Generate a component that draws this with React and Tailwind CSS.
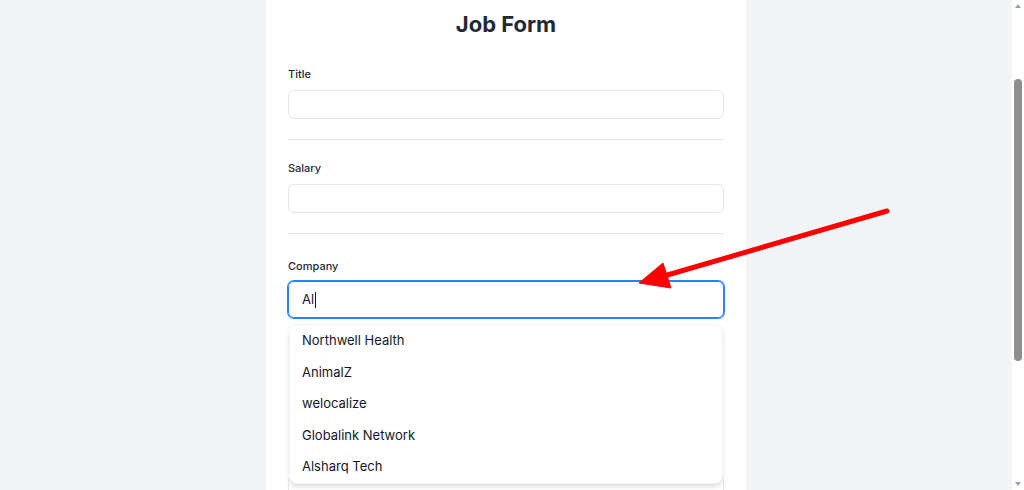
import { useState } from "react";

const companies = ["Northwell Health", "AnimalZ", "welocalize", "Globalink Network", "Alsharq Tech"];

const Field = ({ label, top = "pt-5" }) => {
  return (
    <div className={top}>
      <p className="text-[11px] font-medium text-gray-800 leading-4">{label}</p>
      <div className="mt-2 h-[29px] rounded-md border border-gray-200 bg-white"></div>
    </div>
  );
};

const Divider = () => <div className="mt-5 border-t border-gray-200"></div>;

const App = () => {
  const [value] = useState("Al");

  return (
    <div className="relative flex h-[490px] overflow-hidden bg-gray-100 font-['Inter',sans-serif]">
      {/* Page */}
      <div className="flex flex-1 justify-center">
        <div className="w-[480px] bg-white px-[22px]">
          <h1 className="pt-2 text-center text-[22px] font-bold leading-8 text-[#1f2937]">Job Form</h1>

          <Field label="Title" top="pt-[26px]" />
          <Divider />
          <Field label="Salary" />
          <Divider />

          {/* Company with suggestions */}
          <div className="relative pt-6">
            <p className="text-[11px] font-medium text-gray-800 leading-4">Company</p>
            <div className="mt-[7px] flex h-[37px] items-center rounded-md border border-blue-500 px-[13px] ring-1 ring-blue-500">
              <span className="text-[13px] text-gray-900">{value}</span>
              <span className="ml-px h-[16px] w-px bg-gray-900"></span>
            </div>

            <div className="absolute left-px right-px top-[90px] z-10 rounded-lg border border-gray-100 bg-white shadow-md">
              {companies.map((c) => (
                <div key={c} className="flex h-[31.6px] items-center px-3 text-[13px] text-gray-900">
                  {c}
                </div>
              ))}
            </div>
          </div>

          {/* Next field, hidden under the suggestions */}
          <Divider />
          <div className="mt-[137px] h-[29px] rounded-md border border-gray-200 bg-white"></div>
        </div>
      </div>

      {/* Scrollbar */}
      <div className="relative flex w-[12px] flex-col items-center justify-between bg-white py-1">
        <div className="h-0 w-0 border-x-[3px] border-b-[4px] border-x-transparent border-b-gray-400"></div>
        <div className="absolute left-[2px] top-[79px] h-[282px] w-[8px] rounded-full bg-[#8f8f8f]"></div>
        <div className="h-0 w-0 border-x-[3px] border-t-[4px] border-x-transparent border-t-gray-400"></div>
      </div>

      {/* Annotation arrow */}
      <svg className="pointer-events-none absolute inset-0 z-20" width="1024" height="490">
        <line x1="887" y1="211" x2="664" y2="276" stroke="#ff0000" strokeWidth="5" strokeLinecap="round" />
        <polygon points="639,283 663,263 671,288" fill="#ff0000" stroke="#ff0000" strokeWidth="1" strokeLinejoin="round" />
      </svg>
    </div>
  );
};

export default App;
